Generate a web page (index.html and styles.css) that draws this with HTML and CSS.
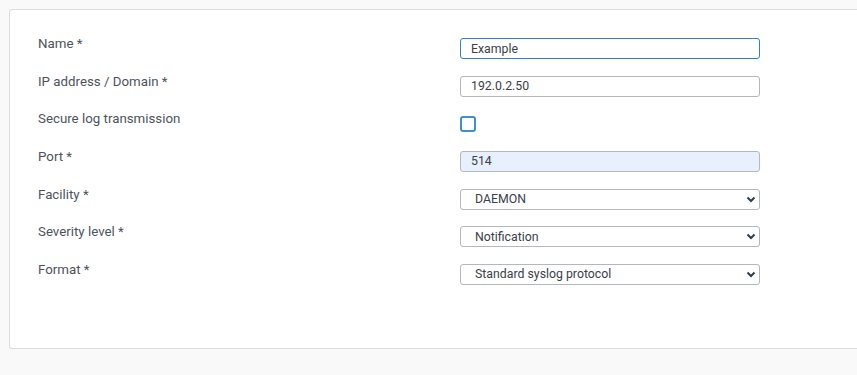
FILE: index.html
```html
<html>
<head>
<meta http-equiv="Content-Type" content="text/html; charset=utf-8"/>
<link rel="stylesheet" href="styles.css">
</head>
<body>
<div class="panel">
  <form class="form">
    <label class="label" for="name">Name *</label>
    <div class="field"><input id="name" class="text focused" type="text" value="Example"></div>

    <label class="label" for="host">IP address / Domain *</label>
    <div class="field"><input id="host" class="text" type="text" value="192.0.2.50"></div>

    <label class="label" for="secure">Secure log transmission</label>
    <div class="field"><span id="secure" class="check"></span></div>

    <label class="label" for="port">Port *</label>
    <div class="field"><input id="port" class="text filled" type="text" value="514"></div>

    <label class="label" for="facility">Facility *</label>
    <div class="field select-wrap">
      <select id="facility" class="select"><option>DAEMON</option></select>
      <svg class="chevron" width="10" height="7" viewBox="0 0 10 7"><path d="M1.5 1.5 L5 5 L8.5 1.5" fill="none" stroke="#2f3d4c" stroke-width="2"/></svg>
    </div>

    <label class="label" for="severity">Severity level *</label>
    <div class="field select-wrap">
      <select id="severity" class="select"><option>Notification</option></select>
      <svg class="chevron" width="10" height="7" viewBox="0 0 10 7"><path d="M1.5 1.5 L5 5 L8.5 1.5" fill="none" stroke="#2f3d4c" stroke-width="2"/></svg>
    </div>

    <label class="label" for="format">Format *</label>
    <div class="field select-wrap">
      <select id="format" class="select"><option>Standard syslog protocol</option></select>
      <svg class="chevron" width="10" height="7" viewBox="0 0 10 7"><path d="M1.5 1.5 L5 5 L8.5 1.5" fill="none" stroke="#2f3d4c" stroke-width="2"/></svg>
    </div>
  </form>
</div>
</body>
</html>
```

FILE: styles.css
```css
body{
margin:0;
padding:9px 0 0 9px;
background:#f9f9f9;
font-family:Roboto,"Noto Sans",sans-serif;
color:#4d545c;
overflow:hidden;
}
.panel{
background:#fff;
border:1px solid #dcdcdc;
border-right:none;
border-radius:3px 0 0 3px;
height:340px;
box-sizing:border-box;
padding:28px 0 0 28px;
}
.form{
margin:0;
display:grid;
grid-template-columns:422px 300px;
grid-auto-rows:21px;
row-gap:16.67px;
}
.label{
font-size:13.3px;
line-height:13px;
margin-top:-1px;
}
.field{
display:flex;
align-items:center;
}
.text,.select{
width:300px;
height:21px;
box-sizing:border-box;
border:1px solid #b4b8bc;
border-radius:3px;
font-family:Roboto,"Noto Sans",sans-serif;
font-size:12.3px;
color:#39414a;
padding:0 10px;
margin:0;
outline:none;
background:#fff;
}
.focused{
border-color:#2b83cc;
}
.filled{
background:#e8f0fe;
}
.check{
width:16px;
height:16px;
box-sizing:border-box;
border:2px solid #3d8fd4;
border-radius:3px;
}
.select-wrap{
position:relative;
}
.select{
appearance:none;
-webkit-appearance:none;
padding:0 14px;
}
.chevron{
position:absolute;
right:4px;
top:7px;
}
```
